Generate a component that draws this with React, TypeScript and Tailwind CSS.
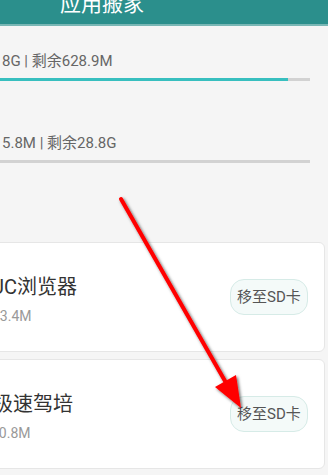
import React from 'react';

const apps = [
  { name: 'UC浏览器', size: '23.4M', offset: '-ml-[10px]', subOffset: '-ml-[9px]' },
  { name: '极速驾培', size: '10.8M', offset: '-ml-[8px]', subOffset: '-ml-[10px]' },
];

const StorageRow: React.FC<{ label: string; fill: number; top: string }> = ({ label, fill, top }) => (
  <div className={top}>
    <div className="text-[15px] leading-[20px] text-[#666] pl-[2px] whitespace-nowrap">{label}</div>
    <div className="mt-[7px] w-[310px] h-[3px] bg-[#d2d2d2]">
      <div className="h-full bg-[#38bfbf]" style={{ width: `${fill}%` }} />
    </div>
  </div>
);

const App: React.FC = () => {
  return (
    <div
      className="relative w-[328px] h-[475px] overflow-hidden bg-[#f5f5f5]"
      style={{ fontFamily: 'Roboto, "Noto Sans CJK SC", sans-serif' }}
    >
      <div className="h-[26px] bg-[#2b8f8c] border-b-2 border-[#79b7b5] overflow-hidden">
        <div className="-mt-[6px] ml-[60px] text-[21px] leading-[21px] text-white">应用搬家</div>
      </div>

      <StorageRow label="8G | 剩余628.9M" fill={93} top="mt-[25px]" />
      <StorageRow label="5.8M | 剩余28.8G" fill={0} top="mt-[52px]" />

      <div className="mt-[79px] flex flex-col gap-[7px] mr-[3px] -ml-[10px]">
        {apps.map((a) => (
          <div
            key={a.name}
            className="h-[110px] bg-white border border-[#e6e6e6] rounded-[6px] flex items-center justify-between pr-[16px]"
          >
            <div className="pl-[10px] pt-[6px] flex flex-col gap-[8px]">
              <div className={`${a.offset} text-[20px] leading-[24px] text-[#333] whitespace-nowrap`}>{a.name}</div>
              <div className={`${a.subOffset} text-[14px] leading-[18px] text-[#999]`}>{a.size}</div>
            </div>
            <button className="w-[78px] h-[36px] rounded-[14px] border border-[#d6ebe7] bg-[#f4faf9] text-[15px] text-[#555] whitespace-nowrap">
              移至SD卡
            </button>
          </div>
        ))}
        <div className="h-[110px] bg-white border border-[#e6e6e6] rounded-[6px]" />
      </div>

      <svg className="absolute inset-0 pointer-events-none" width="328" height="475" viewBox="0 0 328 475">
        <defs>
          <filter id="sh" x="-20%" y="-20%" width="140%" height="140%">
            <feDropShadow dx="1.5" dy="1.5" stdDeviation="1.5" floodColor="#000" floodOpacity="0.6" />
          </filter>
        </defs>
        <g filter="url(#sh)">
          <line x1="121" y1="199" x2="229" y2="388" stroke="#ff0000" strokeWidth="4" strokeLinecap="round" />
          <polygon points="241,408 215,387 236,375" fill="#ff0000" />
        </g>
      </svg>
    </div>
  );
};

export default App;
